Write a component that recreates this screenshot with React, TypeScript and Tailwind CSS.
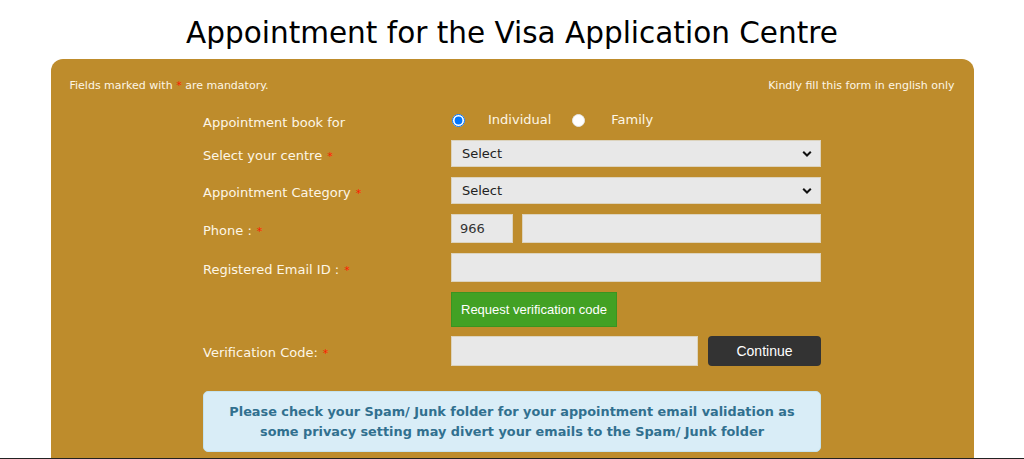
import React from "react";

const Star = () => <span className="text-[#ff1a00] ml-[5px] text-[11px]">*</span>;

function Chevron() {
  return (
    <svg className="pointer-events-none absolute right-[9px] top-1/2 -translate-y-1/2" width="10" height="7" viewBox="0 0 10 7">
      <path d="M1.2 1.2 L5 5 L8.8 1.2" fill="none" stroke="#111" strokeWidth="2" />
    </svg>
  );
}

function Row({ label, star, children, className }: { label?: string; star?: boolean; children: React.ReactNode; className: string }) {
  return (
    <div className={"flex items-center " + className}>
      <div className="w-[248px] pt-[4px] text-[13px] text-[#fdf6e6]">
        {label}
        {star && <Star />}
      </div>
      <div className="w-[370px] flex items-center">{children}</div>
    </div>
  );
}

export default function App() {
  return (
    <div className="h-[459px] overflow-hidden bg-white border-b border-[#222] font-['DejaVu_Sans',sans-serif]">
      <h1 className="text-center text-[29.5px] leading-[35px] pt-[16px] h-[59px] text-black">
        Appointment for the Visa Application Centre
      </h1>
      <div className="w-[923px] mx-auto bg-[#be8c2c] rounded-t-[12px] h-[420px] pt-[20px]">
        <div className="flex justify-between px-[19px] text-[11px] leading-[14px] text-[#fdf6e6]">
          <span>
            Fields marked with <span className="text-[#ff1a00]">*</span> are mandatory.
          </span>
          <span>Kindly fill this form in english only</span>
        </div>
        <div className="w-[618px] mx-auto mt-[17px]">
          <Row label="Appointment book for" className="h-[22px]">
            <label className="flex items-center">
              <input type="radio" name="b" defaultChecked className="w-[13px] h-[13px] ml-[1px] -mt-[2px] accent-[#0075ff]" />
              <span className="ml-[23px] text-[13px] text-[#fdf6e6] -mt-[3px]">Individual</span>
            </label>
            <label className="flex items-center ml-[21px]">
              <input type="radio" name="b" className="w-[13px] h-[13px] -mt-[2px] appearance-none rounded-full bg-white border border-[#e6e6e6]" />
              <span className="ml-[26px] text-[13px] text-[#fdf6e6] -mt-[3px]">Family</span>
            </label>
          </Row>
          <Row label="Select your centre" star className="h-[27px] mt-[8px]">
            <div className="relative w-full h-[27px]">
              <select className="appearance-none w-full h-full bg-[#e8e8e8] border border-[#dcd3bd] pl-[10px] text-[13px] text-[#222]">
                <option>Select</option>
              </select>
              <Chevron />
            </div>
          </Row>
          <Row label="Appointment Category" star className="h-[27px] mt-[10px]">
            <div className="relative w-full h-[27px]">
              <select className="appearance-none w-full h-full bg-[#e8e8e8] border border-[#dcd3bd] pl-[10px] text-[13px] text-[#222]">
                <option>Select</option>
              </select>
              <Chevron />
            </div>
          </Row>
          <Row label="Phone :" star className="h-[29px] mt-[10px]">
            <input defaultValue="966" className="w-[62px] h-[29px] bg-[#e8e8e8] border border-[#dcd3bd] pl-[8px] text-[13px] text-[#333]" />
            <input className="ml-[9px] flex-1 h-[29px] bg-[#e8e8e8] border border-[#dcd3bd]" />
          </Row>
          <Row label="Registered Email ID :" star className="h-[29px] mt-[10px]">
            <input className="w-full h-[29px] bg-[#e8e8e8] border border-[#dcd3bd]" />
          </Row>
          <Row className="h-[35px] mt-[10px]">
            <button className="h-[35px] w-[166px] bg-[#42a124] border border-[#3a9420] text-white text-[13px] font-['Liberation_Sans',Arial,sans-serif]">
              Request verification code
            </button>
          </Row>
          <Row label="Verification Code:" star className="h-[30px] mt-[9px]">
            <input className="w-[247px] h-[30px] bg-[#e8e8e8] border border-[#dcd3bd]" />
            <button className="ml-[10px] w-[113px] h-[30px] bg-[#333333] rounded-[4px] text-white text-[14px] font-['Liberation_Sans',Arial,sans-serif]">
              Continue
            </button>
          </Row>
          <div className="mt-[25px] h-[61px] bg-[#d9edf7] border border-[#c4e3ef] rounded-[5px] flex flex-col items-center justify-center text-[12.85px] leading-[20px] font-bold text-[#31708f]">
            <div>Please check your Spam/ Junk folder for your appointment email validation as</div>
            <div>some privacy setting may divert your emails to the Spam/ Junk folder</div>
          </div>
        </div>
      </div>
    </div>
  );
}
